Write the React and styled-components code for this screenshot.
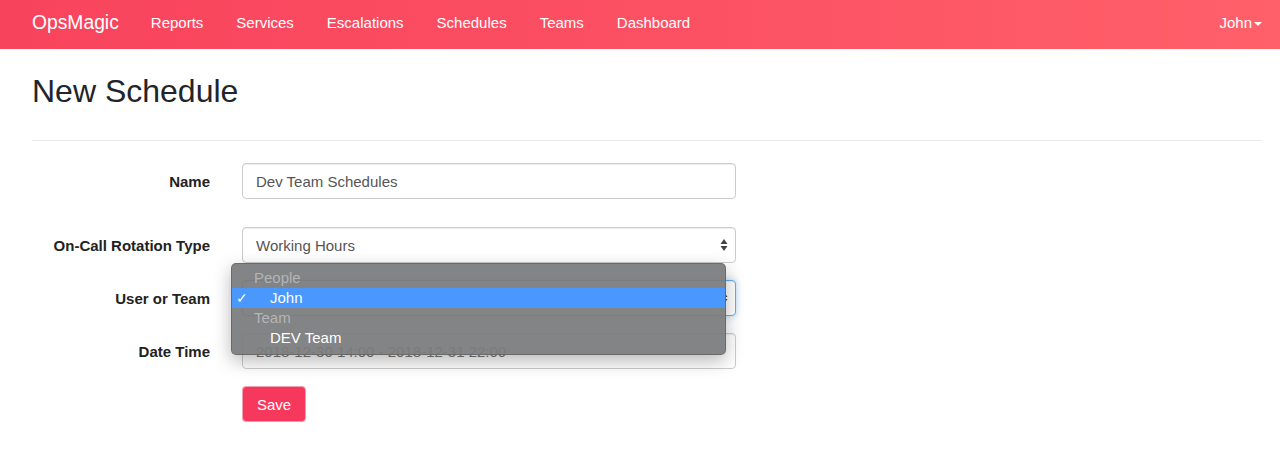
import React from "react";
import styled, { createGlobalStyle } from "styled-components";

const GlobalStyle = createGlobalStyle`
  body {
    margin: 0;
    font-family: "Liberation Sans", Arial, sans-serif;
    font-size: 14px;
    color: #333;
    background: #fff;
  }
`;

const NavBar = styled.nav`
  height: 49px;
  box-sizing: border-box;
  padding: 0 18px 4px 32px;
  display: flex;
  align-items: center;
  background: linear-gradient(90deg, #f8435d 0%, #fc5163 55%, #ff606a 100%);
  color: #fff;
`;

const Brand = styled.span`
  font-size: 19.3px;
  margin-right: 32px;
`;

const NavLinks = styled.div`
  display: flex;
  gap: 33px;
  flex: 1;
`;

const NavLink = styled.a`
  font-size: 15px;
  color: #fff;
  text-decoration: none;
`;

const UserMenu = styled.span`
  font-size: 15px;
  display: flex;
  align-items: center;
  gap: 2px;
`;

const Caret = styled.span`
  width: 0;
  height: 0;
  border-left: 4px solid transparent;
  border-right: 4px solid transparent;
  border-top: 4px solid #fff;
  margin-top: 2px;
`;

const Page = styled.main`
  padding: 0 18px 0 32px;
`;

const Title = styled.h1`
  font-size: 32px;
  font-weight: 400;
  color: #212529;
  margin: 0;
  padding: 24px 0 31px;
  line-height: 36px;
  border-bottom: 1px solid #eaeaea;
`;

const Form = styled.form`
  padding-top: 22px;
  display: grid;
  grid-template-columns: 178px 494px;
  column-gap: 32px;
  align-items: center;
`;

const Label = styled.label`
  font-weight: 700;
  font-size: 15px;
  color: #222;
  text-align: right;
  margin-bottom: ${(p) => p.$gap || 17}px;
`;

const Field = styled.div`
  position: relative;
  height: 36px;
  margin-bottom: ${(p) => p.$gap || 17}px;
`;

const Input = styled.div`
  box-sizing: border-box;
  height: 36px;
  border: 1px solid ${(p) => (p.$focus ? "#66afe9" : "#ccc")};
  border-radius: 4px;
  box-shadow: ${(p) =>
    p.$focus
      ? "inset 0 1px 1px rgba(0,0,0,.075), 0 0 6px rgba(102,175,233,.5)"
      : "inset 0 1px 1px rgba(0,0,0,.075)"};
  padding: 0 10px 0 13px;
  display: flex;
  align-items: center;
  justify-content: space-between;
  color: ${(p) => (p.$muted ? "#777" : "#555")};
  font-size: 15px;
  background: #fff;
`;

const Arrows = styled.svg`
  width: 8px;
  height: 14px;
  margin-right: -3px;
`;

const Menu = styled.div`
  position: absolute;
  left: -11px;
  top: -17px;
  width: 495px;
  box-sizing: border-box;
  padding: 4px 0 6px;
  background: rgba(122, 123, 124, 0.93);
  border: 1px solid rgba(90, 90, 90, 0.6);
  border-radius: 5px;
  box-shadow: 0 6px 18px rgba(0, 0, 0, 0.28);
  z-index: 2;
`;

const GroupHead = styled.div`
  height: 20px;
  line-height: 20px;
  padding-left: 22px;
  color: #b4b5b6;
  font-size: 15px;
`;

const Option = styled.div`
  position: relative;
  height: 20px;
  line-height: 20px;
  padding-left: 38px;
  font-size: 15px;
  color: #fff;
  background: ${(p) => (p.$active ? "#4a97fd" : "transparent")};
`;

const Check = styled.span`
  position: absolute;
  left: 4px;
  top: 0;
  font-size: 14px;
`;

const SaveButton = styled.button`
  grid-column: 2;
  justify-self: start;
  height: 36px;
  padding: 0 14px;
  font-family: inherit;
  font-size: 15px;
  color: #fff;
  background: #f5385b;
  border: 1px solid #f0a0ae;
  border-radius: 4px;
`;

const SelectArrows = () => (
  <Arrows viewBox="0 0 8 14">
    <path d="M4 1 L7.5 6 L0.5 6 Z" fill="#444" />
    <path d="M4 13 L7.5 8 L0.5 8 Z" fill="#444" />
  </Arrows>
);

export default function App() {
  const links = ["Reports", "Services", "Escalations", "Schedules", "Teams", "Dashboard"];

  return (
    <>
      <GlobalStyle />
      <NavBar>
        <Brand>OpsMagic</Brand>
        <NavLinks>
          {links.map((l) => (
            <NavLink key={l} href="#">
              {l}
            </NavLink>
          ))}
        </NavLinks>
        <UserMenu>
          John <Caret />
        </UserMenu>
      </NavBar>
      <Page>
        <Title>New Schedule</Title>
        <Form>
          <Label $gap={28}>Name</Label>
          <Field $gap={28}>
            <Input>Dev Team Schedules</Input>
          </Field>

          <Label>On-Call Rotation Type</Label>
          <Field>
            <Input>
              Working Hours
              <SelectArrows />
            </Input>
          </Field>

          <Label>User or Team</Label>
          <Field>
            <Input $focus>
              John
              <SelectArrows />
            </Input>
            <Menu>
              <GroupHead>People</GroupHead>
              <Option $active>
                <Check>✓</Check>
                John
              </Option>
              <GroupHead>Team</GroupHead>
              <Option>DEV Team</Option>
            </Menu>
          </Field>

          <Label>Date Time</Label>
          <Field>
            <Input $muted>2018-12-30 14:00 - 2018-12-31 22:00</Input>
          </Field>

          <SaveButton type="button">Save</SaveButton>
        </Form>
      </Page>
    </>
  );
}
